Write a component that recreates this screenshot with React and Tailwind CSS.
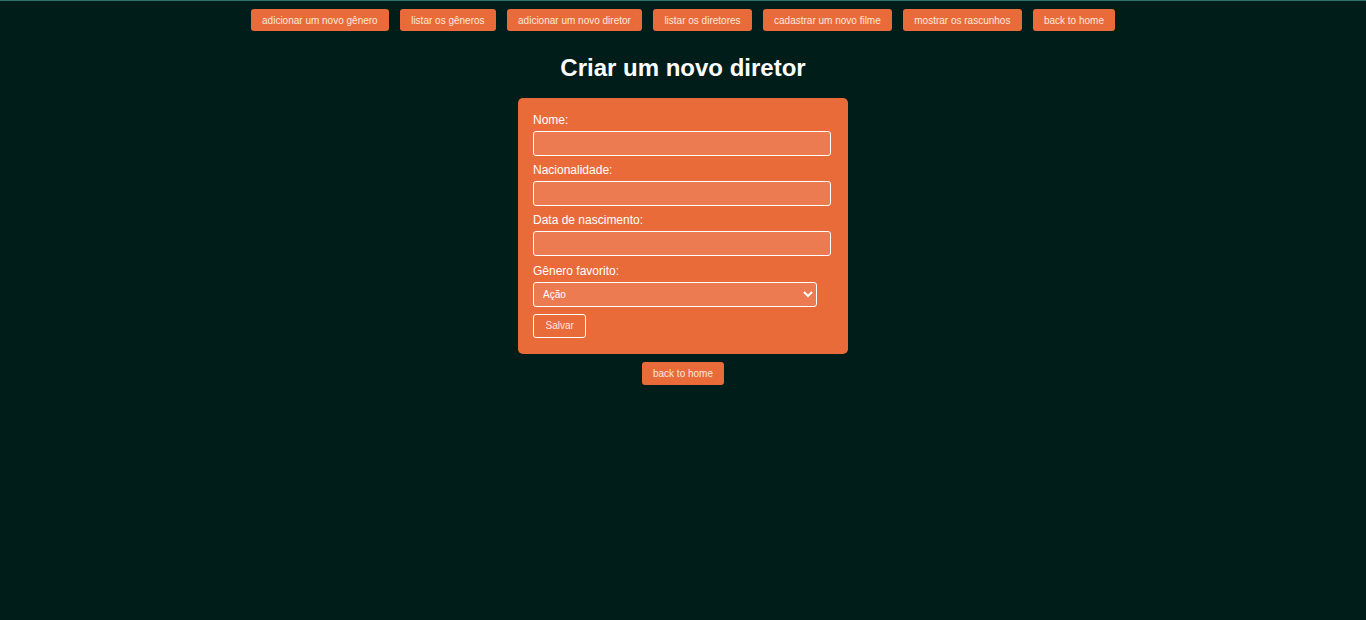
import React from 'react';

const links = [
  'adicionar um novo gênero',
  'listar os gêneros',
  'adicionar um novo diretor',
  'listar os diretores',
  'cadastrar um novo filme',
  'mostrar os rascunhos',
  'back to home',
];

function Field({ label }) {
  return (
    <div className="flex flex-col">
      <label className="text-[12px] leading-[14px] text-white">{label}</label>
      <input
        type="text"
        className="mt-[4px] h-[25px] w-[298px] rounded-[3px] border border-white bg-[#ec7b52] px-2 text-[12px] text-white outline-none"
      />
    </div>
  );
}

export default function App() {
  return (
    <div
      className="min-h-[620px] w-full border-t border-[#2f6f6c] bg-[#011d1a] text-white"
      style={{ fontFamily: '"Liberation Sans", Arial, sans-serif' }}
    >
      {/* nav */}
      <nav className="flex justify-center gap-[11px] pt-[8px]">
        {links.map((l) => (
          <a
            key={l}
            href="#"
            className="flex h-[22px] items-center rounded-[3px] bg-[#e96b39] px-[11.25px] text-[10px] text-[#fde8df]"
          >
            {l}
          </a>
        ))}
      </nav>

      <h1 className="mt-[23px] text-center text-[24px] font-bold leading-[28px] text-white">
        Criar um novo diretor
      </h1>

      <div className="flex flex-col items-center">
        <form className="mt-[16px] flex w-[330px] flex-col gap-[7px] rounded-[5px] bg-[#e96b39] px-[15px] pb-[16px] pt-[15px]">
          <Field label="Nome:" />
          <Field label="Nacionalidade:" />
          <Field label="Data de nascimento:" />
          <div className="mt-[1px] flex flex-col">
            <label className="text-[12px] leading-[14px] text-white">Gênero favorito:</label>
            <select className="mt-[4px] h-[25px] w-[284px] rounded-[3px] border border-white bg-[#ec7b52] pl-[5px] text-[10px] text-white outline-none">
              <option>Ação</option>
            </select>
          </div>
          <div className="-mt-[2px]">
            <button
              type="button"
              className="h-[24px] rounded-[3px] border border-white px-[11.5px] text-[10px] text-[#fde8df]"
            >
              Salvar
            </button>
          </div>
        </form>

        <a
          href="#"
          className="mt-[8px] flex h-[23px] items-center rounded-[3px] bg-[#e96b39] px-[11px] text-[10px] text-[#fde8df]"
        >
          back to home
        </a>
      </div>
    </div>
  );
}
